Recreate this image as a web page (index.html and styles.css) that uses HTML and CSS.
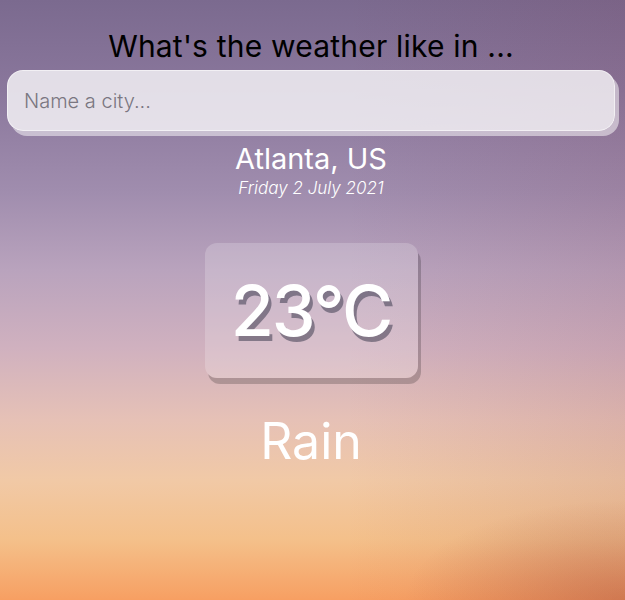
FILE: index.html
```html
<!DOCTYPE html>
<html lang="en">
<head>
<meta charset="utf-8">
<title>Weather</title>
<link rel="stylesheet" href="styles.css">
</head>
<body>
<main class="app">
  <h1 class="title">What's the weather like in ...</h1>
  <div class="search">
    <input class="search-bar" type="text" placeholder="Name a city..." autofocus>
  </div>
  <div class="location-box">
    <div class="location">Atlanta, US</div>
    <div class="date">Friday 2 July 2021</div>
  </div>
  <div class="weather-box">
    <div class="temp">23°C</div>
    <div class="weather">Rain</div>
  </div>
</main>
</body>
</html>
```
FILE: styles.css
```css
* { box-sizing: border-box; }
html, body { margin: 0; height: 100%; }
body {
  font-family: "Inter", "Noto Sans", sans-serif;
  background:
    radial-gradient(ellipse 220px 100px at 100% 100%, rgba(160,70,55,0.35), rgba(160,70,55,0) 100%),
    linear-gradient(to right, rgba(0,0,0,0) 55%, rgba(120,40,60,0.10) 100%),
    linear-gradient(to bottom,
      #7b6a8f 0%,
      #8a779c 15%,
      #a08dae 32%,
      #b9a3bd 45%,
      #d0b1bf 58%,
      #e6c1b6 70%,
      #f1c9a6 80%,
      #f4c08a 90%,
      #f79f62 100%);
  min-height: 600px;
  overflow: hidden;
}
.app {
  display: flex;
  flex-direction: column;
  align-items: center;
  padding: 28px 10px 0 7px;
}
.title {
  margin: 0;
  font-size: 30px;
  line-height: 36px;
  font-weight: 400;
  color: #000;
  letter-spacing: 0.2px;
}
.search { width: 100%; margin-top: 6px; }
.search-bar {
  display: block;
  width: 100%;
  height: 61px;
  padding: 0 16px;
  border: 1px solid rgba(255,255,255,0.55);
  outline: none;
  border-radius: 16px;
  background: rgba(255,255,255,0.76);
  box-shadow: 4px 5px 0 rgba(255,255,255,0.5);
  font-family: inherit;
  font-size: 20px;
  font-weight: 300;
  color: #313131;
}
.search-bar::placeholder { color: #7a7680; }
.location-box {
  display: flex;
  flex-direction: column;
  align-items: center;
  color: #fff;
  margin-top: 11px;
}
.location {
  font-size: 29px;
  line-height: 34px;
  font-weight: 400;
}
.date {
  margin-top: 1px;
  font-size: 17px;
  line-height: 22px;
  font-style: italic;
  font-weight: 300;
}
.weather-box {
  display: flex;
  flex-direction: column;
  align-items: center;
  color: #fff;
}
.temp {
  margin-top: 44px;
  width: 213px;
  height: 135px;
  display: flex;
  align-items: center;
  justify-content: center;
  border-radius: 12px;
  background: rgba(255,255,255,0.2);
  box-shadow: 3px 6px 0 rgba(0,0,0,0.2);
  font-size: 70px;
  font-weight: 500;
  letter-spacing: -2px;
  text-shadow: 3px 5px 0 rgba(50,50,70,0.5);
}
.weather {
  margin-top: 34px;
  font-size: 50px;
  line-height: 58px;
  font-weight: 400;
}
```
